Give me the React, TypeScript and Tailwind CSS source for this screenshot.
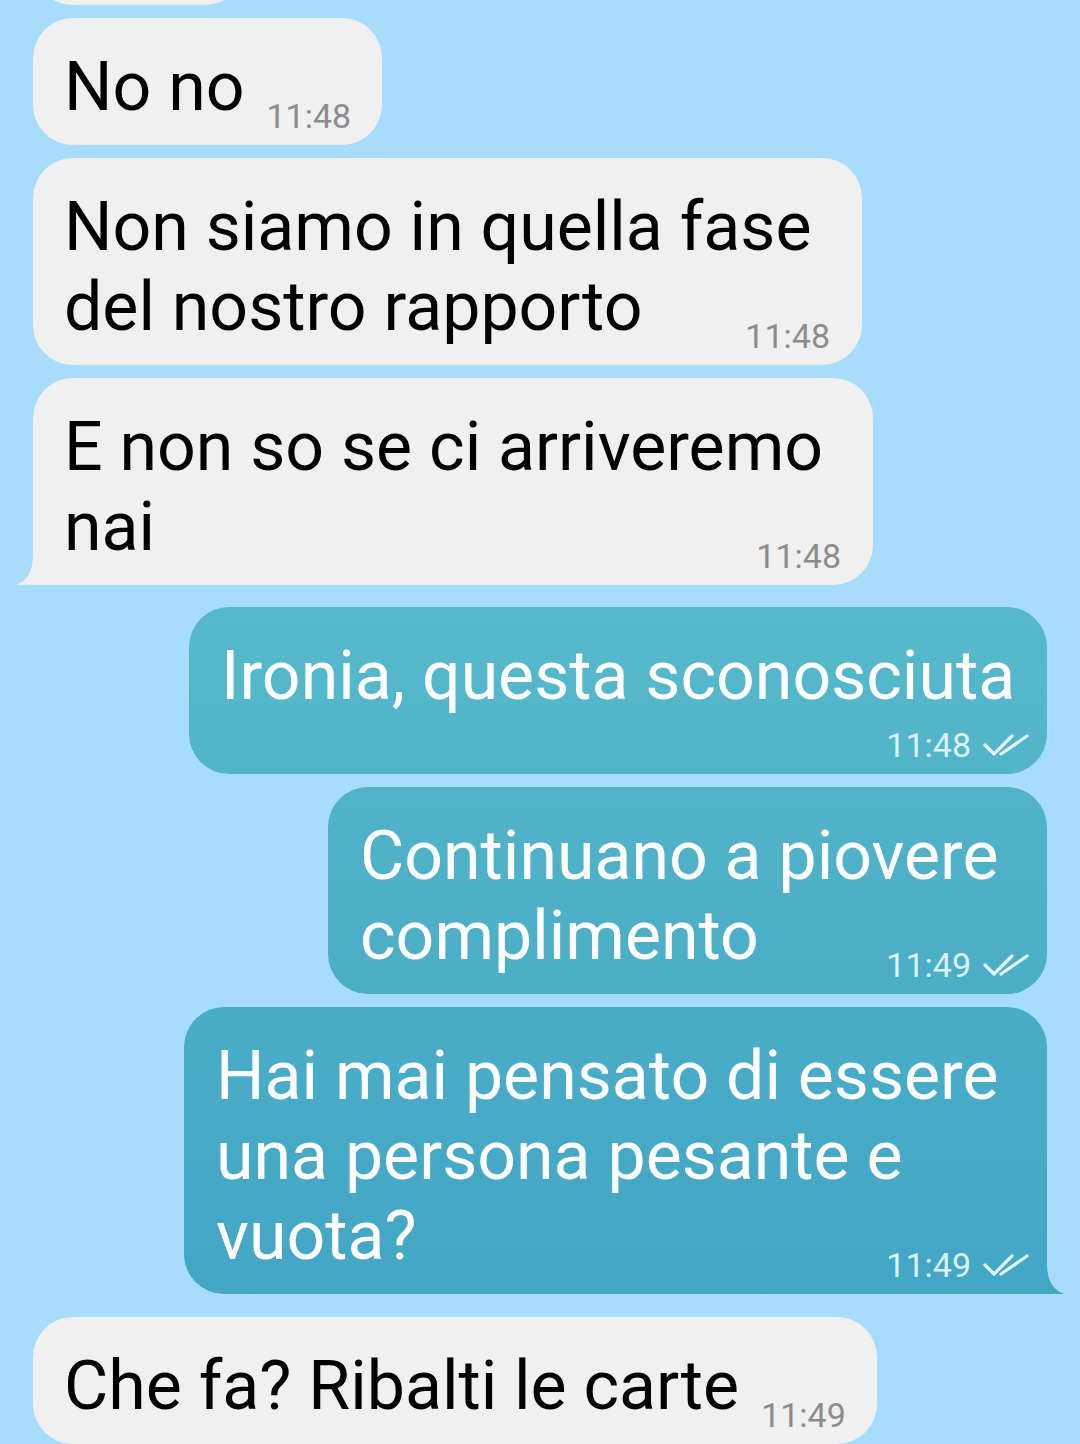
const font = { fontFamily: "Roboto, 'Noto Sans', sans-serif" };

const Checks = () => (
  <svg width="46" height="24" viewBox="0 0 46 24" fill="none" className="ml-[12px]">
    <path d="M2 12 L11 21 L29 3" stroke="#e3f5f9" strokeWidth="3.2" strokeLinecap="round" strokeLinejoin="round" />
    <path d="M18 21 L44 3" stroke="#e3f5f9" strokeWidth="3.2" strokeLinecap="round" />
  </svg>
);

const Time = ({ t, sent }: { t: string; sent?: boolean }) => (
  <span
    className={`flex items-center text-[34px] leading-[34px] -mb-[6px] shrink-0 ${
      sent ? "text-[#dcf2f7]" : "text-[#8c8c8c]"
    }`}
  >
    {t}
    {sent && <Checks />}
  </span>
);

const Received = ({
  lines,
  time,
  width,
  tail,
}: {
  lines: string[];
  time: string;
  width: string;
  tail?: boolean;
}) => (
  <div
    className={`relative bg-[#f0f0f0] text-black rounded-[40px] pl-[31px] pr-[32px] pt-[29px] pb-[18px] ${width} ${
      tail ? "rounded-bl-none" : ""
    }`}
  >
    {lines.slice(0, -1).map((l) => (
      <div key={l} className="text-[68px] leading-[80px] whitespace-nowrap">
        {l}
      </div>
    ))}
    <div className="flex items-end justify-between gap-[22px]">
      <span className="text-[68px] leading-[80px] whitespace-nowrap">{lines[lines.length - 1]}</span>
      <Time t={time} />
    </div>
    {tail && (
      <svg className="absolute -left-[17px] bottom-0" width="18" height="30" viewBox="0 0 18 30">
        <path d="M17 0 L18 0 L18 30 L0 30 C8 27 17 20 17 0 Z" fill="#f0f0f0" />
      </svg>
    )}
  </div>
);

const Sent = ({
  lines,
  width,
  time,
  grad,
  own,
  tail,
}: {
  lines: string[];
  width: string;
  time: string;
  grad: string;
  own?: boolean;
  tail?: boolean;
}) => (
  <div
    className={`relative self-end text-white rounded-[40px] pl-[32px] pr-[18px] pt-[29px] pb-[18px] bg-gradient-to-b ${grad} ${width} ${
      tail ? "rounded-br-none" : ""
    }`}
  >
    {lines.slice(0, own ? undefined : -1).map((l) => (
      <div key={l} className="text-[68px] leading-[80px] whitespace-nowrap">
        {l}
      </div>
    ))}
    {own ? (
      <div className="flex justify-end h-[40px] items-end">
        <Time t={time} sent />
      </div>
    ) : (
      <div className="flex items-end justify-between">
        <span className="text-[68px] leading-[80px] whitespace-nowrap">{lines[lines.length - 1]}</span>
        <Time t={time} sent />
      </div>
    )}
    {tail && (
      <svg className="absolute -right-[17px] bottom-0" width="18" height="30" viewBox="0 0 18 30">
        <path d="M1 0 L0 0 L0 30 L18 30 C10 27 1 20 1 0 Z" fill="#42a6c5" />
      </svg>
    )}
  </div>
);

export default function App() {
  return (
    <div className="w-[1080px] h-[1444px] overflow-hidden bg-[#a8dcfc]" style={font}>
      <div className="flex flex-col pl-[33px] pr-[33px]">
        <div className="w-[212px] h-[127px] -mt-[122px] bg-[#f0f0f0] rounded-[40px]" />
        <div className="mt-[13px]">
          <Received lines={["No no"]} time="11:48" width="w-[349px]" />
        </div>
        <div className="mt-[13px]">
          <Received
            lines={["Non siamo in quella fase", "del nostro rapporto"]}
            time="11:48"
            width="w-[829px]"
          />
        </div>
        <div className="mt-[13px]">
          <Received lines={["E non so se ci arriveremo", "nai"]} time="11:48" width="w-[840px]" tail />
        </div>
        <div className="mt-[22px] flex flex-col items-end pr-0">
          <Sent
            lines={["Ironia, questa sconosciuta"]}
            time="11:48"
            width="w-[858px]"
            grad="from-[#56b9cb] to-[#52b4c9]"
            own
          />
          <div className="mt-[13px]">
            <Sent
              lines={["Continuano a piovere", "complimento"]}
              time="11:49"
              width="w-[719px]"
              grad="from-[#51b3c9] to-[#4baec7]"
            />
          </div>
          <div className="mt-[13px]">
            <Sent
              lines={["Hai mai pensato di essere", "una persona pesante e", "vuota?"]}
              time="11:49"
              width="w-[863px]"
              grad="from-[#4aadc8] to-[#42a6c5]"
              tail
            />
          </div>
        </div>
        <div className="mt-[23px]">
          <Received lines={["Che fa? Ribalti le carte"]} time="11:49" width="w-[844px]" />
        </div>
      </div>
    </div>
  );
}
